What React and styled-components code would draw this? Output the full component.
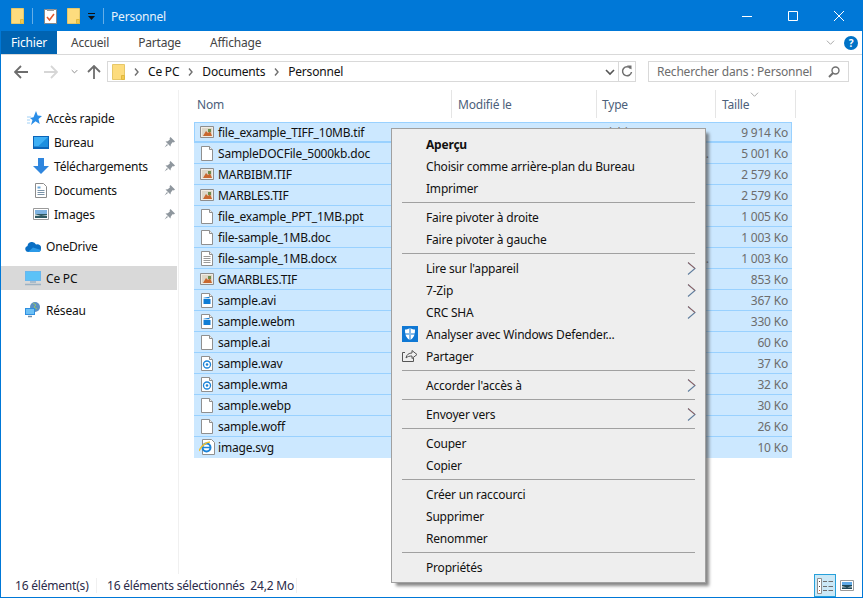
import React from 'react';
import styled, { createGlobalStyle } from 'styled-components';

const GlobalStyle = createGlobalStyle`
  html, body { margin: 0; padding: 0; background: #fff; }
  body {
    font-family: "Noto Sans", "Open Sans", "Liberation Sans", sans-serif;
    font-size: 12px;
    color: #000;
  }
`;

const Window = styled.div`
  width: 863px;
  height: 598px;
  box-sizing: border-box;
  border: 1px solid #0078d7;
  display: flex;
  flex-direction: column;
  position: relative;
  overflow: hidden;
  background: #fff;
  letter-spacing: -0.2px;
`;

/* title bar */
const TitleBar = styled.div`
  height: 30px;
  flex: none;
  background: #0078d7;
  display: flex;
  align-items: center;
  padding-left: 10px;
  color: #e8f2fb;
`;
const QuickSlot = styled.span`
  display: flex;
  margin-left: ${p => p.$left || 0}px;
`;
const TitleSep = styled.span`
  width: 1px;
  height: 16px;
  background: #66aee7;
  margin-left: ${p => p.$left || 0}px;
`;
const TitleText = styled.span`
  margin-left: 7px;
`;
const WindowButtons = styled.div`
  margin-left: auto;
  display: flex;
`;
const WindowButton = styled.div`
  width: 46px;
  height: 30px;
  display: flex;
  align-items: center;
  justify-content: center;
`;

/* ribbon tabs */
const Ribbon = styled.div`
  height: 23px;
  flex: none;
  display: flex;
  align-items: center;
  border-bottom: 1px solid #d9d9d9;
  color: #444;
`;
const FileTab = styled.div`
  width: 56px;
  height: 23px;
  background: #0063b1;
  color: #fff;
  display: flex;
  align-items: center;
  justify-content: center;
`;
const RibbonTab = styled.div`
  margin-left: ${p => p.$left}px;
`;
const RibbonRight = styled.div`
  margin-left: auto;
  display: flex;
  align-items: center;
  gap: 9px;
  padding-right: 4px;
`;
const HelpBadge = styled.div`
  width: 14px;
  height: 14px;
  border-radius: 50%;
  background: #0072c6;
  color: #fff;
  font-weight: 700;
  font-size: 10px;
  line-height: 14px;
  text-align: center;
`;

/* address row */
const NavBar = styled.div`
  height: 35px;
  flex: none;
  box-sizing: border-box;
  padding: 6px 0 0 5px;
  display: flex;
  align-items: flex-start;
`;
const NavSlot = styled.div`
  width: ${p => p.$w}px;
  height: 21px;
  display: flex;
  align-items: center;
  justify-content: center;
`;
const AddressBox = styled.div`
  width: 529px;
  height: 21px;
  margin-left: 3px;
  box-sizing: border-box;
  border: 1px solid #d9d9d9;
  display: flex;
  align-items: center;
  padding-left: 4px;
`;
const Crumb = styled.span`
  display: flex;
  align-items: center;
  color: #111;
  gap: 9px;
  margin-left: ${p => p.$left || 0}px;
`;
const AddressEnd = styled.div`
  margin-left: auto;
  display: flex;
  align-items: center;
  height: 100%;
`;
const RefreshButton = styled.div`
  width: 16px;
  height: 100%;
  margin-left: 3px;
  border-left: 1px solid #d9d9d9;
  display: flex;
  align-items: center;
  justify-content: center;
`;
const SearchBox = styled.div`
  width: 201px;
  height: 21px;
  margin-left: 12px;
  box-sizing: border-box;
  border: 1px solid #d9d9d9;
  display: flex;
  align-items: center;
  justify-content: space-between;
  padding: 0 8px;
  color: #6d6d6d;
`;

/* body */
const Body = styled.div`
  flex: 1;
  display: flex;
  min-height: 0;
`;
const Sidebar = styled.nav`
  width: 178px;
  flex: none;
  box-sizing: border-box;
  border-right: 1px solid #f0f0f0;
  padding-top: 16px;
`;
const NavRow = styled.div`
  height: 24px;
  width: 176px;
  display: flex;
  align-items: center;
  position: relative;
  padding-left: ${p => p.$indent}px;
  box-sizing: border-box;
  margin-top: ${p => p.$top || 0}px;
  background: ${p => (p.$active ? '#d9d9d9' : 'transparent')};
  color: #111;
`;
const NavIcon = styled.span`
  display: flex;
  width: ${p => p.$w}px;
  justify-content: center;
  flex: none;
  margin-right: ${p => p.$gap}px;
`;
const PinSlot = styled.span`
  margin-left: auto;
  display: flex;
  padding-right: 2px;
`;
const Main = styled.main`
  flex: 1;
  padding-left: 15px;
  min-width: 0;
`;
const columns = '258px 145px 119px 80px';
const HeaderRow = styled.div`
  display: grid;
  grid-template-columns: ${columns};
  height: 28px;
  margin-bottom: 4px;
  color: #4c607a;
`;
const HeaderCell = styled.div`
  position: relative;
  box-sizing: border-box;
  border-right: 1px solid #e5e5e5;
  padding-left: ${p => p.$pad}px;
  display: flex;
  align-items: center;
  padding-top: 1px;
`;
const SortMark = styled.span`
  position: absolute;
  top: 0;
  left: 34px;
  display: flex;
`;
const FileList = styled.div`
  width: 598px;
`;
const FileRow = styled.div`
  display: grid;
  grid-template-columns: 258px 145px 119px 76px;
  height: 21px;
  box-sizing: border-box;
  background: #cce8ff;
  border-bottom: 1px solid ${p => (p.$last ? '#cce8ff' : '#99d1ff')};
  ${p => p.$focus && 'box-shadow: inset 0 0 0 1px #99d1ff;'}
  align-items: center;
`;
const NameCell = styled.div`
  display: flex;
  align-items: center;
  padding-left: ${p => (p.$wide ? 4 : 5)}px;
  color: #111;
  white-space: nowrap;
`;
const IconSlot = styled.span`
  display: flex;
  width: 16px;
  margin-right: 3px;
  justify-content: center;
  flex: none;
`;
const MutedCell = styled.div`
  color: #6d6d6d;
  padding-left: ${p => p.$pad}px;
  white-space: nowrap;
  overflow: hidden;
  text-overflow: ellipsis;
`;
const SizeCell = styled.div`
  color: #6d6d6d;
  text-align: right;
  padding-right: 4px;
`;

/* status bar */
const StatusBar = styled.div`
  height: 23px;
  flex: none;
  display: flex;
  align-items: center;
  color: #2b2b4a;
`;
const StatusPart = styled.span`
  box-sizing: border-box;
  width: ${p => p.$w}px;
  padding-left: ${p => p.$pad}px;
  height: 15px;
  line-height: 15px;
  border-right: 1px solid #f0f0f0;
  white-space: pre;
`;
const ViewButtons = styled.div`
  margin-left: auto;
  display: flex;
  align-items: center;
  height: 100%;
  padding-right: 8px;
  gap: 4px;
`;
const ViewButton = styled.div`
  width: 22px;
  height: 23px;
  box-sizing: border-box;
  border: ${p => (p.$active ? '1px solid #26a0da' : '1px solid transparent')};
  background: ${p => (p.$active ? '#cbe8f6' : 'transparent')};
  display: flex;
  align-items: center;
  justify-content: center;
`;
const PlainViewIcon = styled.span`
  display: flex;
`;

/* context menu */
const ContextMenu = styled.div`
  position: absolute;
  left: 390px;
  top: 127px;
  width: 315px;
  box-sizing: border-box;
  background: #eee;
  border: 1px solid #a0a0a0;
  padding: 4px 0;
  box-shadow: 4px 4px 3px -1px rgba(70, 70, 70, 0.65);
  color: #111;
`;
const MenuItem = styled.div`
  height: 22px;
  display: flex;
  align-items: center;
  position: relative;
  padding-left: 34px;
  font-weight: ${p => (p.$bold ? 700 : 400)};
`;
const MenuIcon = styled.span`
  position: absolute;
  left: 10px;
  top: 3px;
  display: flex;
`;
const MenuArrow = styled.span`
  position: absolute;
  right: 9px;
  top: 5px;
  display: flex;
`;
const MenuSep = styled.div`
  height: 1px;
  margin: 3px 10px 3px 10px;
  background: #a0a0a0;
`;

/* drawings */
const Folder = () => (
  <svg width="13" height="16" viewBox="0 0 13 16">
    <path d="M.5.5h12v15H.5z" fill="#fddc7e" stroke="#e6c768" />
    <path d="M9.5 11.5h3v4h-3z" fill="#f2c94f" stroke="#e0b83f" />
  </svg>
);
const NoteIcon = () => (
  <svg width="13" height="16" viewBox="0 0 13 16">
    <path d="M.5 1.5h12v14H.5z" fill="#fff" stroke="#8a8a8a" />
    <path d="M3 1h7v2H3z" fill="#9a9a9a" />
    <path d="M3 9l2.5 3L10 6" fill="none" stroke="#e2572b" strokeWidth="1.5" />
  </svg>
);
const QuickDrop = () => (
  <svg width="9" height="9" viewBox="0 0 9 9">
    <path d="M1 1.5h7" stroke="#111" />
    <path d="M1 4h7L4.5 8z" fill="#111" />
  </svg>
);
const Chevron = ({ size = 9, color = '#808080', width = 1.4 }) => (
  <svg width={size} height={size} viewBox="0 0 10 10">
    <path d="M1 3l4 4 4-4" fill="none" stroke={color} strokeWidth={width} />
  </svg>
);
const CrumbArrow = () => (
  <svg width="5" height="8" viewBox="0 0 5 8">
    <path d="M1 0.5L4 4 1 7.500" fill="none" stroke="#707070" strokeWidth="1.4" />
  </svg>
);
const NavArrow = ({ color, dir }) => {
  const rot = dir === 'left' ? 0 : dir === 'right' ? 180 : 90;
  return (
    <svg width="14" height="14" viewBox="0 0 14 14" style={{ transform: `rotate(${rot}deg)` }}>
      <path d="M1 7h13M7 1L1 7l6 6" fill="none" stroke={color} strokeWidth="1.8" />
    </svg>
  );
};
const Refresh = () => (
  <svg width="12" height="13" viewBox="0 0 12 13">
    <path d="M9.600 3.500A4.500 4.500 0 1 0 10.500 7" fill="none" stroke="#707070" strokeWidth="1.500" />
    <path d="M6 0.500l4.500 0v4z" fill="#707070" />
  </svg>
);
const SearchGlass = () => (
  <svg width="12" height="12" viewBox="0 0 12 12">
    <circle cx="7.500" cy="4.500" r="3.500" fill="none" stroke="#707070" strokeWidth="1.400" />
    <path d="M5 7l-4 4" stroke="#707070" strokeWidth="2" />
  </svg>
);
const Star = () => (
  <svg width="15" height="15" viewBox="0 0 15 15">
    <path d="M9 0l1.700 4.600L15 5l-3.500 3 1.200 5L8.500 10.300 4 14l1.500-5L3 7l3.500-.8z" fill="#2a8ee8" />
    <path d="M0 6h4M0 9h3M0 12h3" stroke="#9fd0f6" />
  </svg>
);
const DesktopIcon = () => (
  <svg width="16" height="13" viewBox="0 0 16 13">
    <path d="M0 0h16v13H0z" fill="#0a64b8" />
    <path d="M1 1h14v9.500H1z" fill="#3fb0f5" />
    <path d="M15 1v9.500H5z" fill="#1c8fe0" />
  </svg>
);
const DownloadIcon = () => (
  <svg width="16" height="16" viewBox="0 0 16 16">
    <path d="M5 0h6v8h5l-8 8-8-8h5z" fill="#2f86de" />
  </svg>
);
const DocIcon = () => (
  <svg width="12" height="15" viewBox="0 0 12 15">
    <path d="M.5.500h8l3 3v11H.5z" fill="#fff" stroke="#8c8c8c" />
    <path d="M2.500 3.500h3v2h-3z" fill="#6aa7d8" />
    <path d="M2.500 7.500h7M2.500 9.500h7M2.500 11.500h7" stroke="#7a93a8" />
  </svg>
);
const PicturesIcon = () => (
  <svg width="16" height="12" viewBox="0 0 16 12">
    <path d="M.5.500h15v11H.5z" fill="#fff" stroke="#9a9a9a" />
    <path d="M2 2h12v4H2z" fill="#7fb3e0" />
    <path d="M2 6h12v4H2z" fill="#2f5a62" />
    <path d="M2 6l6 2 6-1v1H2z" fill="#c5d3d6" />
  </svg>
);
const Pin = () => (
  <svg width="11" height="11" viewBox="0 0 11 11">
    <path d="M6.500 0L11 4.500 9.800 5.500 8.800 5 6.800 7.400 6.500 9.500 1.500 4.500 3.800 4.200 6 2.200 5.500 1.200zM3 7L.5 10.500 4 8z" fill="#8f979e" />
  </svg>
);
const CloudIcon = () => (
  <svg width="16" height="11" viewBox="0 0 16 11">
    <path d="M3 11a3 3 0 0 1-.5-5.900A4.500 4.500 0 0 1 11 3.500 3.700 3.700 0 0 1 16 8c0 2-1.300 3-3 3z" fill="#0a6fc4" />
    <path d="M3 11h10c1.500 0 2.500-.7 2.900-2L8 6.500z" fill="#2b9ae8" />
  </svg>
);
const PcIcon = () => (
  <svg width="16" height="15" viewBox="0 0 16 15">
    <path d="M0 0h16v10H0z" fill="#69b7ee" />
    <path d="M1 1h14v8H1z" fill="#5cc2f7" />
    <path d="M5 10h6v2H5z" fill="#a9bccb" />
    <path d="M0 13.500h16" stroke="#9fb2c2" strokeWidth="1.500" />
  </svg>
);
const NetworkIcon = () => (
  <svg width="16" height="16" viewBox="0 0 16 16">
    <circle cx="10" cy="5" r="5" fill="#5b8fc2" />
    <path d="M8 1l3 2-2 2 3 2" stroke="#8fc46a" fill="none" />
    <path d="M0 6h10v7H0z" fill="#2f8fe0" />
    <path d="M1 7h8v5H1z" fill="#6cc0f5" />
    <path d="M3 14.500h4" stroke="#6f8faa" strokeWidth="1.500" />
  </svg>
);
const TifIcon = () => (
  <svg width="14" height="12" viewBox="0 0 14 12">
    <path d="M.5.500h13v11H.5z" fill="#f1ece4" stroke="#8d8d8d" />
    <path d="M2 2h10v8H2z" fill="#ddd6c8" />
    <path d="M3 10l3-5 2 2 2-2 2 5z" fill="#c9682f" />
    <path d="M8 3h3v3H8z" fill="#6e8c4c" />
  </svg>
);
const PageBase = ({ children }) => (
  <svg width="12" height="15" viewBox="0 0 12 15">
    <path d="M.5.500h8l3 3v11H.5z" fill="#fff" stroke="#8f8f8f" />
    <path d="M8.500.500v3h3" fill="#eee" stroke="#8f8f8f" />
    {children}
  </svg>
);
const TextPage = () => (
  <PageBase>
    <path d="M2.500 5.500h7M2.500 7.500h7M2.500 9.500h7M2.500 11.500h7" stroke="#9a9a9a" />
  </PageBase>
);
const VideoPage = () => (
  <PageBase>
    <path d="M2.500 6h7v5h-7z" fill="#0f7dd6" />
    <path d="M2.500 4.700l6-1v1.500h-6z" fill="#0f7dd6" />
  </PageBase>
);
const AudioPage = () => (
  <PageBase>
    <circle cx="6" cy="8.500" r="3.500" fill="none" stroke="#1b83d8" strokeWidth="1.300" />
    <circle cx="6" cy="8.500" r="1.300" fill="#1b83d8" />
  </PageBase>
);
const IePage = () => (
  <svg width="16" height="16" viewBox="0 0 16 16">
    <path d="M3.500.500h9l3 3v12h-12z" fill="#fff" stroke="#8f8f8f" />
    <circle cx="7.500" cy="8.500" r="4" fill="none" stroke="#1b83d8" strokeWidth="2" />
    <path d="M4 8.500h7" stroke="#1b83d8" strokeWidth="1.500" />
    <path d="M0 12C2 7 7 3 11 3" fill="none" stroke="#f2c12e" strokeWidth="1.400" />
  </svg>
);
const Shield = () => (
  <svg width="16" height="16" viewBox="0 0 16 16">
    <path d="M0 0h16v16H0z" fill="#0f78d4" />
    <path d="M8 2c2 1.200 3.500 1.500 5 1.500 0 5-1 8.500-5 10.500C4 12 3 8.500 3 3.500 4.500 3.500 6 3.200 8 2z" fill="#fff" />
    <path d="M7.500 2v12h1V2zM3 7.500h10v1H3z" fill="#0f78d4" />
  </svg>
);
const ShareIcon = () => (
  <svg width="16" height="14" viewBox="0 0 16 14">
    <path d="M3 4.500H.5v9h11V10" fill="none" stroke="#555" />
    <path d="M4 10c.500-3.500 3-5 6-5V2.500l5 4-5 4V8c-2.500 0-4.500.500-6 2z" fill="none" stroke="#555" />
  </svg>
);
const SubArrow = () => (
  <svg width="9" height="13" viewBox="0 0 9 13">
    <path d="M1 .5l7 6-7 6" fill="none" stroke="#5f7d9d" strokeWidth="1.100" />
    <path d="M1 .5l7 6" fill="none" stroke="#b5533c" strokeWidth=".7" />
  </svg>
);
const DetailsIcon = () => (
  <svg width="16" height="16" viewBox="0 0 16 16">
    <path d="M.5.500h4v15h-4z" fill="#fff" stroke="#8f8f8f" />
    <path d="M2 3h1v1H2zM2 8h1v1H2z" fill="#444" />
    <path d="M2 12h1v1H2z" fill="#d9542b" />
    <path d="M6 3.500h4M11.500 3.500H16M6 8.500h4M11.500 8.500H16M6 12.500h4M11.500 12.500H16" stroke="#6d6d6d" />
  </svg>
);
const TilesIcon = () => (
  <svg width="14" height="11" viewBox="0 0 14 11">
    <path d="M.5.500h13v10H.5z" fill="#fff" stroke="#9a9a9a" />
    <path d="M2 2h10v3H2z" fill="#5fa9e6" />
    <path d="M2 5h10v4H2z" fill="#1f4756" />
    <path d="M2 6l5 1.500L12 6v1.500H2z" fill="#bccbd0" />
  </svg>
);

const iconByKind = {
  tif: <TifIcon />,
  blank: <PageBase />,
  text: <TextPage />,
  video: <VideoPage />,
  audio: <AudioPage />,
  ie: <IePage />,
};

const files = [
  ['file_example_TIFF_10MB.tif', '10/07/2019 13:40', 'Fichier TIF', '9 914 Ko', 'tif'],
  ['SampleDOCFile_5000kb.doc', '10/07/2019 13:40', 'Document Microsoft Word', '5 001 Ko', 'blank'],
  ['MARBIBM.TIF', '10/07/2019 13:40', 'Fichier TIF', '2 579 Ko', 'tif'],
  ['MARBLES.TIF', '10/07/2019 13:40', 'Fichier TIF', '2 579 Ko', 'tif'],
  ['file_example_PPT_1MB.ppt', '10/07/2019 13:40', 'Présentation', '1 005 Ko', 'blank'],
  ['file-sample_1MB.doc', '10/07/2019 13:40', 'Document', '1 003 Ko', 'blank'],
  ['file-sample_1MB.docx', '10/07/2019 13:40', 'Document Microsoft Word', '1 003 Ko', 'text'],
  ['GMARBLES.TIF', '10/07/2019 13:40', 'Fichier TIF', '853 Ko', 'tif'],
  ['sample.avi', '10/07/2019 13:40', 'Fichier AVI', '367 Ko', 'video'],
  ['sample.webm', '10/07/2019 13:40', 'Fichier WEBM', '330 Ko', 'video'],
  ['sample.ai', '10/07/2019 13:40', 'Fichier AI', '60 Ko', 'blank'],
  ['sample.wav', '10/07/2019 13:40', 'Fichier WAV', '37 Ko', 'audio'],
  ['sample.wma', '10/07/2019 13:40', 'Fichier WMA', '32 Ko', 'audio'],
  ['sample.webp', '10/07/2019 13:40', 'Fichier WEBP', '30 Ko', 'blank'],
  ['sample.woff', '10/07/2019 13:40', 'Fichier WOFF', '26 Ko', 'blank'],
  ['image.svg', '10/07/2019 13:40', 'Fichier SVG', '10 Ko', 'ie'],
];

const menuGroups = [
  [{ label: 'Aperçu', bold: true }, { label: 'Choisir comme arrière-plan du Bureau' }, { label: 'Imprimer' }],
  [{ label: 'Faire pivoter à droite' }, { label: 'Faire pivoter à gauche' }],
  [
    { label: "Lire sur l'appareil", sub: true },
    { label: '7-Zip', sub: true },
    { label: 'CRC SHA', sub: true },
    { label: 'Analyser avec Windows Defender...', icon: <Shield /> },
    { label: 'Partager', icon: <ShareIcon /> },
  ],
  [{ label: "Accorder l'accès à", sub: true }],
  [{ label: 'Envoyer vers', sub: true }],
  [{ label: 'Couper' }, { label: 'Copier' }],
  [{ label: 'Créer un raccourci' }, { label: 'Supprimer' }, { label: 'Renommer' }],
  [{ label: 'Propriétés' }],
];

export default function App() {
  return (
    <>
      <GlobalStyle />
      <Window>
        <TitleBar>
          <QuickSlot><Folder /></QuickSlot>
          <TitleSep $left={8} />
          <QuickSlot $left={11}><NoteIcon /></QuickSlot>
          <QuickSlot $left={10}><Folder /></QuickSlot>
          <QuickSlot $left={7}><QuickDrop /></QuickSlot>
          <TitleSep $left={7} />
          <TitleText>Personnel</TitleText>
          <WindowButtons>
            <WindowButton>
              <svg width="10" height="10" viewBox="0 0 10 10"><path d="M0 5.500h10" stroke="#fff" /></svg>
            </WindowButton>
            <WindowButton>
              <svg width="10" height="10" viewBox="0 0 10 10"><path d="M.5.500h9v9h-9z" fill="none" stroke="#fff" /></svg>
            </WindowButton>
            <WindowButton>
              <svg width="10" height="10" viewBox="0 0 10 10"><path d="M0 0l10 10M10 0L0 10" stroke="#fff" /></svg>
            </WindowButton>
          </WindowButtons>
        </TitleBar>

        <Ribbon>
          <FileTab>Fichier</FileTab>
          <RibbonTab $left={14}>Accueil</RibbonTab>
          <RibbonTab $left={29}>Partage</RibbonTab>
          <RibbonTab $left={29}>Affichage</RibbonTab>
          <RibbonRight>
            <Chevron size={9} color="#a0a0a0" width={1} />
            <HelpBadge>?</HelpBadge>
          </RibbonRight>
        </Ribbon>

        <NavBar>
          <NavSlot $w={30}><NavArrow color="#6d6d6d" dir="left" /></NavSlot>
          <NavSlot $w={30}><NavArrow color="#d6d6d6" dir="right" /></NavSlot>
          <NavSlot $w={17}><Chevron size={7} color="#8a8a8a" /></NavSlot>
          <NavSlot $w={21}><NavArrow color="#6d6d6d" dir="up" /></NavSlot>
          <AddressBox>
            <Folder />
            <Crumb $left={9}><CrumbArrow />Ce PC</Crumb>
            <Crumb $left={9}><CrumbArrow />Documents</Crumb>
            <Crumb $left={9}><CrumbArrow />Personnel</Crumb>
            <AddressEnd>
              <Chevron size={10} color="#555" width={1.6} />
              <RefreshButton><Refresh /></RefreshButton>
            </AddressEnd>
          </AddressBox>
          <SearchBox>
            Rechercher dans : Personnel
            <SearchGlass />
          </SearchBox>
        </NavBar>

        <Body>
          <Sidebar>
            <NavRow $indent={26}><NavIcon $w={15} $gap={4}><Star /></NavIcon>Accès rapide</NavRow>
            <NavRow $indent={32}><NavIcon $w={16} $gap={5}><DesktopIcon /></NavIcon>Bureau<PinSlot><Pin /></PinSlot></NavRow>
            <NavRow $indent={32}><NavIcon $w={16} $gap={5}><DownloadIcon /></NavIcon>Téléchargements<PinSlot><Pin /></PinSlot></NavRow>
            <NavRow $indent={32}><NavIcon $w={16} $gap={5}><DocIcon /></NavIcon>Documents<PinSlot><Pin /></PinSlot></NavRow>
            <NavRow $indent={32}><NavIcon $w={16} $gap={5}><PicturesIcon /></NavIcon>Images<PinSlot><Pin /></PinSlot></NavRow>
            <NavRow $indent={24} $top={8}><NavIcon $w={16} $gap={5}><CloudIcon /></NavIcon>OneDrive</NavRow>
            <NavRow $indent={24} $top={8} $active><NavIcon $w={16} $gap={5}><PcIcon /></NavIcon>Ce PC</NavRow>
            <NavRow $indent={24} $top={8}><NavIcon $w={16} $gap={5}><NetworkIcon /></NavIcon>Réseau</NavRow>
          </Sidebar>

          <Main>
            <HeaderRow>
              <HeaderCell $pad={3}>Nom</HeaderCell>
              <HeaderCell $pad={6}>Modifié le</HeaderCell>
              <HeaderCell $pad={5}>Type</HeaderCell>
              <HeaderCell $pad={6}>
                Taille
                <SortMark><Chevron size={9} color="#a0a0a0" width={1} /></SortMark>
              </HeaderCell>
            </HeaderRow>
            <FileList>
              {files.map(([name, date, type, size, kind], i) => (
                <FileRow key={name} $focus={i === 0} $last={i === files.length - 1}>
                  <NameCell>
                    <IconSlot>{iconByKind[kind]}</IconSlot>
                    {name}
                  </NameCell>
                  <MutedCell $pad={8}>{date}</MutedCell>
                  <MutedCell $pad={6}>{type}</MutedCell>
                  <SizeCell>{size}</SizeCell>
                </FileRow>
              ))}
            </FileList>
          </Main>
        </Body>

        <StatusBar>
          <StatusPart $w={96} $pad={14}>16 élément(s)</StatusPart>
          <StatusPart $w={200} $pad={10}>16 éléments sélectionnés  24,2 Mo</StatusPart>
          <ViewButtons>
            <ViewButton $active><DetailsIcon /></ViewButton>
            <PlainViewIcon><TilesIcon /></PlainViewIcon>
          </ViewButtons>
        </StatusBar>

        <ContextMenu>
          {menuGroups.map((group, g) => (
            <React.Fragment key={g}>
              {g > 0 && <MenuSep />}
              {group.map(item => (
                <MenuItem key={item.label} $bold={item.bold}>
                  {item.icon && <MenuIcon>{item.icon}</MenuIcon>}
                  {item.label}
                  {item.sub && <MenuArrow><SubArrow /></MenuArrow>}
                </MenuItem>
              ))}
            </React.Fragment>
          ))}
        </ContextMenu>
      </Window>
    </>
  );
}
